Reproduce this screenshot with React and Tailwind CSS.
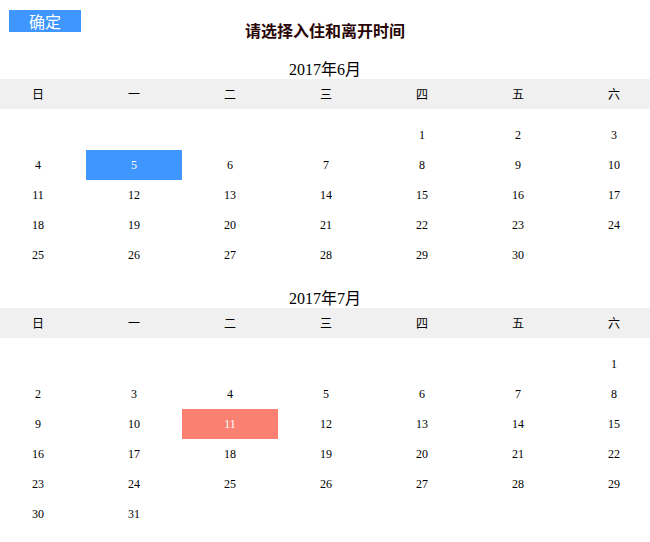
import React from "react";

const WEEKDAYS = ["日", "一", "二", "三", "四", "五", "六"];

const MONTHS = [
  { label: "2017年6月", firstDay: 4, days: 30 },
  { label: "2017年7月", firstDay: 6, days: 31 },
];

// picked range: check-in on 6/5, check-out on 7/11
const isCheckIn = (label, d) => label === "2017年6月" && d === 5;
const isCheckOut = (label, d) => label === "2017年7月" && d === 11;

const numFont = { fontFamily: '"Liberation Serif", "Noto Sans CJK SC", serif' };

/**
 * One month of the picker: title, weekday bar and a 7-column day grid
 */
const Month = ({ label, firstDay, days, className }) => {
  const cells = [
    ...Array.from({ length: firstDay }, () => null),
    ...Array.from({ length: days }, (_, i) => i + 1),
  ];

  return (
    <section className={className}>
      <h2
        className="h-[19px] text-center text-[16px] leading-[19px] font-normal text-black"
        style={numFont}
      >
        {label}
      </h2>
      <div className="overflow-hidden bg-[#f0f0f0]">
        <div className="-ml-[10px] grid w-[672px] grid-cols-[repeat(7,96px)]">
          {WEEKDAYS.map((w) => (
            <div
              key={w}
              className="flex h-[30px] items-center justify-center text-[12px] text-black"
            >
              {w}
            </div>
          ))}
        </div>
      </div>
      <div className="mt-[11px] overflow-hidden">
        <div className="-ml-[10px] grid w-[672px] grid-cols-[repeat(7,96px)]">
          {cells.map((d, i) => {
            let tone = "text-black";
            if (d && isCheckIn(label, d)) tone = "bg-[#4096ff] text-white";
            if (d && isCheckOut(label, d)) tone = "bg-[#fa8072] text-white";
            return (
              <div
                key={i}
                className={`flex h-[30px] items-center justify-center text-[12px] ${tone}`}
                style={numFont}
              >
                {d}
              </div>
            );
          })}
        </div>
      </div>
    </section>
  );
};

export default function App() {
  return (
    <div
      className="w-[650px] overflow-hidden bg-white pb-[13px]"
      style={{ fontFamily: '"Noto Sans CJK SC", "Liberation Sans", sans-serif' }}
    >
      <header className="grid h-[40px] grid-cols-[1fr_auto_1fr]">
        <div>
          <button
            type="button"
            className="mt-[10px] ml-[9px] flex h-[22px] w-[72px] items-center justify-center bg-[#4096ff] text-[16px] leading-none text-white"
          >
            确定
          </button>
        </div>
        <h1 className="mt-[20px] text-[16px] leading-[20px] font-bold text-[#2a0505]">
          请选择入住和离开时间
        </h1>
        <div />
      </header>

      {MONTHS.map((m, i) => (
        <Month
          key={m.label}
          {...m}
          className={i === 0 ? "mt-[20px]" : "mt-[19px]"}
        />
      ))}
    </div>
  );
}
